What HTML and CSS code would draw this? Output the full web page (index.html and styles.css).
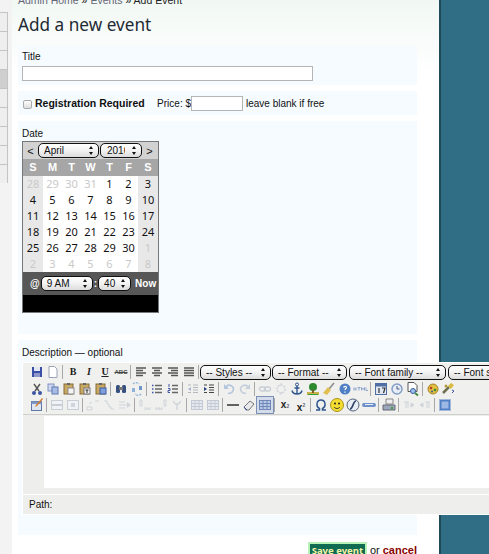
FILE: index.html
```html
<!DOCTYPE html>
<html lang="en">
<head>
  <meta charset="UTF-8" />
  <title>Add a new event</title>
  <link rel="stylesheet" href="styles.css">
</head>
<body>

  <svg class="defs" width="0" height="0">
    <symbol id="save" viewBox="0 0 16 16"><rect x="3" y="3" width="10" height="10" fill="#3a4fa8"/><rect x="5" y="3" width="6" height="4" fill="#e4e8f4"/><rect x="5" y="9" width="6" height="4" fill="#8f98c8"/></symbol>
    <symbol id="new" viewBox="0 0 16 16"><path d="M4 2.500h5.500l2.500 2.500v8.500h-8z" fill="#fff" stroke="#9aa3b5"/></symbol>
    <symbol id="alignl" viewBox="0 0 16 16"><path d="M3 4h10M3 6.500h7M3 9h10M3 11.500h7" stroke="#555" stroke-width="1.500"/></symbol>
    <symbol id="alignc" viewBox="0 0 16 16"><path d="M3 4h10M5 6.500h6M3 9h10M5 11.500h6" stroke="#555" stroke-width="1.500"/></symbol>
    <symbol id="alignr" viewBox="0 0 16 16"><path d="M3 4h10M6 6.500h7M3 9h10M6 11.500h7" stroke="#555" stroke-width="1.500"/></symbol>
    <symbol id="alignj" viewBox="0 0 16 16"><path d="M3 4h10M3 6.500h10M3 9h10M3 11.500h10" stroke="#555" stroke-width="1.500"/></symbol>
    <symbol id="cut" viewBox="0 0 16 16"><path d="M5 3l5 7M11 3l-5 7" stroke="#555" stroke-width="1.400"/><circle cx="5" cy="12" r="2" fill="#3c55a5"/><circle cx="11" cy="12" r="2" fill="#3c55a5"/></symbol>
    <symbol id="copy" viewBox="0 0 16 16"><rect x="3" y="3" width="6" height="7" fill="#cfd8ee" stroke="#7f93c4"/><rect x="7" y="6" width="6" height="7" fill="#a9bce6" stroke="#5f78b4"/></symbol>
    <symbol id="paste" viewBox="0 0 16 16"><rect x="3" y="3" width="9" height="10" fill="#c9a862" stroke="#85693a"/><rect x="6" y="2" width="3" height="2" fill="#666"/><rect x="7" y="7" width="6" height="6" fill="#f4f4f4" stroke="#8a8a8a"/></symbol>
    <symbol id="pastet" viewBox="0 0 16 16"><rect x="3" y="3" width="9" height="10" fill="#c9a862" stroke="#85693a"/><rect x="6" y="2" width="3" height="2" fill="#666"/><rect x="7" y="7" width="6" height="6" fill="#eee" stroke="#777"/><path d="M8.500 9h3M10 9v3" stroke="#333"/></symbol>
    <symbol id="pastew" viewBox="0 0 16 16"><rect x="3" y="3" width="9" height="10" fill="#c9a862" stroke="#85693a"/><rect x="6" y="2" width="3" height="2" fill="#666"/><rect x="7" y="7" width="6" height="6" fill="#7f9fdc" stroke="#3c5ca5"/></symbol>
    <symbol id="find" viewBox="0 0 16 16"><rect x="3" y="4" width="4" height="8" rx="1.500" fill="#35507f"/><rect x="9" y="4" width="4" height="8" rx="1.500" fill="#35507f"/><rect x="6" y="6" width="4" height="3" fill="#777"/></symbol>
    <symbol id="replace" viewBox="0 0 16 16"><path d="M4 3a4 4 0 0 1 6 0M12 13a4 4 0 0 1-6 0" fill="none" stroke="#8fb2dc" stroke-width="1.400" stroke-dasharray="2 1"/><rect x="3" y="7" width="3" height="4" fill="#8fb2dc"/><rect x="10" y="5" width="3" height="4" fill="#6f96c8"/></symbol>
    <symbol id="ul" viewBox="0 0 16 16"><path d="M6 4.500h7M6 8h7M6 11.500h7" stroke="#666" stroke-width="1.300"/><path d="M3 4.500h1.500M3 8h1.500M3 11.500h1.500" stroke="#3c55a5" stroke-width="1.500"/></symbol>
    <symbol id="ol" viewBox="0 0 16 16"><path d="M7 4.500h6M7 8h6M7 11.500h6" stroke="#666" stroke-width="1.300"/><path d="M4 3v3M3 7.500h2v2h-2v2h2" fill="none" stroke="#3c55a5"/></symbol>
    <symbol id="outdent" viewBox="0 0 16 16"><path d="M8 4h5M8 6.500h5M8 9h5M8 11.500h5M3 4h3M3 11.500h3" stroke="#b5b8bd"/><path d="M6 6l-3 2 3 2z" fill="#a9b6cc"/></symbol>
    <symbol id="indent" viewBox="0 0 16 16"><path d="M8 4h5M8 6.500h5M8 9h5M8 11.500h5M3 4h3M3 11.500h3" stroke="#444"/><path d="M3 6l3 2-3 2z" fill="#26437f"/></symbol>
    <symbol id="undo" viewBox="0 0 16 16"><path d="M5 6a4 4 0 1 1 2 6" fill="none" stroke="#b4c6de" stroke-width="1.600"/><path d="M3 3v5h5z" fill="#b4c6de"/></symbol>
    <symbol id="redo" viewBox="0 0 16 16"><path d="M11 6a4 4 0 1 0-2 6" fill="none" stroke="#c6cfdc" stroke-width="1.600"/><path d="M13 3v5h-5z" fill="#c6cfdc"/></symbol>
    <symbol id="link" viewBox="0 0 16 16"><rect x="2.500" y="6" width="6" height="4" rx="2" fill="none" stroke="#c8ced6" stroke-width="1.300"/><rect x="7.500" y="6" width="6" height="4" rx="2" fill="none" stroke="#c8ced6" stroke-width="1.300"/></symbol>
    <symbol id="unlink" viewBox="0 0 16 16"><circle cx="8" cy="8" r="4" fill="none" stroke="#d0d4da" stroke-width="1.600" stroke-dasharray="2 1"/><path d="M8 2v3M8 11v3" stroke="#d0d4da"/></symbol>
    <symbol id="anchor" viewBox="0 0 16 16"><circle cx="8" cy="3.500" r="1.500" fill="none" stroke="#2e568f"/><path d="M8 5v8M5.500 7h5M3 9.500c.5 2.500 3 3.500 5 3.500s4.500-1 5-3.500" fill="none" stroke="#2e568f" stroke-width="1.400"/></symbol>
    <symbol id="image" viewBox="0 0 16 16"><rect x="2" y="11" width="12" height="3" fill="#c9b24a"/><circle cx="8" cy="6" r="4" fill="#2e8a2e"/><rect x="7" y="9" width="2" height="3" fill="#7a5a2a"/><rect x="3" y="13" width="10" height="1" fill="#36a336"/></symbol>
    <symbol id="clean" viewBox="0 0 16 16"><path d="M13 2l-5 6" stroke="#8a8a8a" stroke-width="1.500"/><path d="M7 6l3 3-4 5-4-2z" fill="#e0c050"/></symbol>
    <symbol id="help" viewBox="0 0 16 16"><circle cx="8" cy="8" r="5.500" fill="#4f7fc4"/><path d="M6.500 6.500c.5-1.500 3-1.500 3 0 0 1-1.500 1-1.500 2.500M8 10.500v1.200" fill="none" stroke="#fff" stroke-width="1.200"/></symbol>
    <symbol id="html" viewBox="0 0 16 16"><path d="M1 6.500v3M1 8h2M3 6.500v3M4.500 6.500h3M6 6.500v3M8.500 9.500v-3l1.500 2 1.500-2v3M13 6.500v3h2" fill="none" stroke="#8fa6cc"/></symbol>
    <symbol id="date" viewBox="0 0 16 16"><rect x="2.500" y="2.500" width="11" height="11" fill="#dfe6f2" stroke="#4f6fa5"/><rect x="2.500" y="2.500" width="11" height="3" fill="#4f6fa5"/><path d="M6 7v5M9 7h3l-1.500 5" fill="none" stroke="#333" stroke-width="1.200"/></symbol>
    <symbol id="time" viewBox="0 0 16 16"><circle cx="8" cy="8" r="5" fill="#e6edf8" stroke="#7f9bc8" stroke-width="1.400"/><path d="M8 5v3h2.500" fill="none" stroke="#4a5a78"/></symbol>
    <symbol id="preview" viewBox="0 0 16 16"><path d="M3 1.500h6l3 3v6h-9z" fill="#fff" stroke="#555"/><circle cx="8" cy="10" r="2.500" fill="#9cc0e8" stroke="#3c5ca5"/><path d="M10 12l3 2.500" stroke="#3a8a3a" stroke-width="1.800"/></symbol>
    <symbol id="macro" viewBox="0 0 16 16"><circle cx="8" cy="8" r="5" fill="#e0c040" stroke="#a8842a"/><circle cx="6" cy="7" r="1.300" fill="#c03a2a"/><circle cx="10" cy="9" r="1.300" fill="#3a8a3a"/><circle cx="7" cy="10.500" r="1" fill="#3c55a5"/></symbol>
    <symbol id="spell" viewBox="0 0 16 16"><path d="M2 12l6-6" stroke="#707050" stroke-width="2.500"/><path d="M7 5l3-3 3 2-3 4z" fill="#d8bc40"/><path d="M11 9l2 1-2 2" fill="none" stroke="#3c55a5"/><circle cx="5" cy="5" r="1.500" fill="#b09a40"/></symbol>
    <symbol id="tedit" viewBox="0 0 16 16"><rect x="2.500" y="4.500" width="10" height="9" fill="#dfe6f2" stroke="#5f78a8"/><rect x="2.500" y="4.500" width="10" height="2.500" fill="#7f97c4"/><path d="M14 2l-6 7-2 1 1-2 6-7z" fill="#d8792a"/></symbol>
    <symbol id="trow" viewBox="0 0 16 16"><rect x="2.500" y="3.500" width="11" height="9" fill="#f0f2f5" stroke="#c8ced6"/><path d="M3 8h10" stroke="#c8ced6" stroke-width="2"/></symbol>
    <symbol id="tcell" viewBox="0 0 16 16"><rect x="2.500" y="3.500" width="11" height="9" fill="#f0f2f5" stroke="#c8ced6"/><rect x="6" y="6" width="4" height="4" fill="#d0d5dc"/></symbol>
    <symbol id="tsplit" viewBox="0 0 16 16"><path d="M2 13h5v-3h-5zM4 7l3-2M10 4h4" fill="none" stroke="#cfd4da"/></symbol>
    <symbol id="tstep" viewBox="0 0 16 16"><path d="M3 4h3v3h2v3h2v2h3" fill="none" stroke="#cfd4da"/></symbol>
    <symbol id="tarrow" viewBox="0 0 16 16"><path d="M2 5h6M2 11h6M2 8h8" stroke="#d0d5dc"/><path d="M10 5l4 3-4 3z" fill="#d0d5dc"/></symbol>
    <symbol id="colL" viewBox="0 0 16 16"><path d="M3 3v6h2v-6zM8 12h5" fill="none" stroke="#cfd4da"/><path d="M8 10v3M10.500 10v3M13 10v3" stroke="#d4d9df"/></symbol>
    <symbol id="colR" viewBox="0 0 16 16"><path d="M3 12h6M3 10v3M6 10v3M9 10v3M11 3v6h2v-6z" fill="none" stroke="#cfd4da"/></symbol>
    <symbol id="colX" viewBox="0 0 16 16"><path d="M4 4l2.500 3h3l2.500-3M8 7v6" fill="none" stroke="#cfd4da" stroke-width="1.300"/></symbol>
    <symbol id="grid" viewBox="0 0 16 16"><rect x="2.500" y="3.500" width="11" height="9" fill="#e6eaf0" stroke="#c4cad4"/><path d="M2.500 6.500h11M2.500 9.500h11M6 3.500v9M10 3.500v9" stroke="#c4cad4"/></symbol>
    <symbol id="hr" viewBox="0 0 16 16"><path d="M2 8h12" stroke="#333" stroke-width="1.500"/></symbol>
    <symbol id="eraser" viewBox="0 0 16 16"><path d="M3 10l6-6 4 3-5 6H5z" fill="#e8e8ea" stroke="#777"/><path d="M3 10l3 3" stroke="#3c55a5"/></symbol>
    <symbol id="aid" viewBox="0 0 16 16"><rect x="2.500" y="3.500" width="11" height="9" fill="#b8c8e6" stroke="#6f88b8"/><path d="M2.500 6.500h11M2.500 9.500h11M6 3.500v9M10 3.500v9" stroke="#6f88b8"/></symbol>
    <symbol id="omega" viewBox="0 0 16 16"><path d="M3 13h3.500v-1.500c-4-2-3-8.500 1.500-8.500s5.500 6.500 1.500 8.500v1.500h3.500" fill="none" stroke="#2e568f" stroke-width="1.500"/></symbol>
    <symbol id="smile" viewBox="0 0 16 16"><circle cx="8" cy="8" r="6.500" fill="#f4dc30" stroke="#a89420"/><circle cx="6" cy="6.500" r="1" fill="#222"/><circle cx="10" cy="6.500" r="1" fill="#222"/><path d="M5 10c1.500 2 4.500 2 6 0" fill="none" stroke="#333"/></symbol>
    <symbol id="flash" viewBox="0 0 16 16"><circle cx="8" cy="8" r="6" fill="#e8edf5" stroke="#55657f"/><path d="M11 4c-3 0-3 8-6 8" fill="none" stroke="#2e3f66" stroke-width="1.700"/></symbol>
    <symbol id="media" viewBox="0 0 16 16"><rect x="1" y="6" width="14" height="4" rx="2" fill="#6f90c8"/><path d="M4 7.500h8" stroke="#e6eef8"/></symbol>
    <symbol id="print" viewBox="0 0 16 16"><path d="M5 2h7v5h-7z" fill="#eee" stroke="#888"/><path d="M2 8h12v5h-12z" fill="#9ba8bc" stroke="#667"/><rect x="10" y="10" width="2" height="2" fill="#3aa33a"/></symbol>
    <symbol id="ltr" viewBox="0 0 16 16"><path d="M3 5h5M5 5v6M7 5v6M10 6l3 2-3 2z" fill="#cfd4da" stroke="#cfd4da"/></symbol>
    <symbol id="rtl" viewBox="0 0 16 16"><path d="M8 5h5M10 5v6M12 5v6M6 6l-3 2 3 2z" fill="#cfd4da" stroke="#cfd4da"/></symbol>
    <symbol id="full" viewBox="0 0 16 16"><rect x="2.500" y="2.500" width="11" height="11" fill="#4f7fc4" stroke="#a4b8da"/><rect x="4.500" y="4.500" width="7" height="7" fill="#9cb8e4"/></symbol>
  </svg>

  <div class="page">
    <div class="side">
      <div class="side-row"></div>
      <div class="side-row"></div>
      <div class="side-row"></div>
      <div class="side-row dark"></div>
      <div class="side-row"></div>
      <div class="side-row"></div>
      <div class="side-row"></div>
      <div class="side-row"></div>
      <div class="side-row"></div>
    </div>

    <div class="main">
      <div class="crumbs"><a href="#">Admin Home</a> » <a href="#">Events</a> » Add Event</div>
      <h1>Add a new event</h1>

      <div class="box box-title">
        <label>Title</label>
        <input type="text" class="title-input" />
      </div>

      <div class="box box-reg">
        <span class="check"></span>
        <b class="reg-label">Registration Required</b>
        <span class="price">Price: $</span><input type="text" class="price-input" />
        <span class="hint">leave blank if free</span>
      </div>

      <div class="box box-date">
        <label>Date</label>
        <div class="cal">
          <div class="cal-head">
            <span class="nav">&lt;</span>
            <div class="sel sel-month"><span>April</span><i class="arrows"></i></div>
            <div class="sel sel-year"><span>2016</span><i class="arrows"></i></div>
            <span class="nav">&gt;</span>
          </div>
          <div class="cal-grid days">
            <span>S</span><span>M</span><span>T</span><span>W</span><span>T</span><span>F</span><span>S</span>
          </div>
          <div class="cal-grid dates">
            <span class="we off">28</span><span class="off">29</span><span class="off">30</span><span class="off">31</span><span>1</span><span>2</span><span class="we">3</span>
            <span class="we">4</span><span>5</span><span>6</span><span>7</span><span>8</span><span>9</span><span class="we">10</span>
            <span class="we">11</span><span>12</span><span>13</span><span>14</span><span>15</span><span>16</span><span class="we">17</span>
            <span class="we">18</span><span>19</span><span>20</span><span>21</span><span>22</span><span>23</span><span class="we">24</span>
            <span class="we">25</span><span>26</span><span>27</span><span>28</span><span>29</span><span>30</span><span class="we off">1</span>
            <span class="we off">2</span><span class="off">3</span><span class="off">4</span><span class="off">5</span><span class="off">6</span><span class="off">7</span><span class="we off">8</span>
          </div>
          <div class="cal-time">
            <b>@</b>
            <div class="sel sel-hour"><span>9 AM</span><i class="arrows"></i></div>
            <b>:</b>
            <div class="sel sel-min"><span>40</span><i class="arrows"></i></div>
            <b class="now">Now</b>
          </div>
          <div class="cal-foot"></div>
        </div>
      </div>

      <div class="box box-desc">
        <label>Description — optional</label>
        <div class="editor">
          <div class="toolbar">
            <div class="row">
              <svg class="ico"><use href="#save"/></svg>
              <svg class="ico"><use href="#new"/></svg>
              <i class="sep"></i>
              <span class="ico txt">B</span>
              <span class="ico txt it">I</span>
              <span class="ico txt un">U</span>
              <span class="ico txt abc">ABC</span>
              <i class="sep"></i>
              <svg class="ico"><use href="#alignl"/></svg>
              <svg class="ico"><use href="#alignc"/></svg>
              <svg class="ico"><use href="#alignr"/></svg>
              <svg class="ico"><use href="#alignj"/></svg>
              <i class="sep"></i>
              <div class="sel sel-styles"><span>-- Styles --</span><i class="arrows"></i></div>
              <div class="sel sel-format"><span>-- Format --</span><i class="arrows"></i></div>
              <div class="sel sel-family"><span>-- Font family --</span><i class="arrows"></i></div>
              <div class="sel sel-size"><span>-- Font size --</span><i class="arrows"></i></div>
            </div>
            <div class="row">
              <svg class="ico"><use href="#cut"/></svg>
              <svg class="ico"><use href="#copy"/></svg>
              <svg class="ico"><use href="#paste"/></svg>
              <svg class="ico"><use href="#pastet"/></svg>
              <svg class="ico"><use href="#pastew"/></svg>
              <i class="sep"></i>
              <svg class="ico"><use href="#find"/></svg>
              <svg class="ico"><use href="#replace"/></svg>
              <i class="sep"></i>
              <svg class="ico"><use href="#ul"/></svg>
              <svg class="ico"><use href="#ol"/></svg>
              <i class="sep"></i>
              <svg class="ico"><use href="#outdent"/></svg>
              <svg class="ico"><use href="#indent"/></svg>
              <i class="sep"></i>
              <svg class="ico"><use href="#undo"/></svg>
              <svg class="ico"><use href="#redo"/></svg>
              <i class="sep"></i>
              <svg class="ico"><use href="#link"/></svg>
              <svg class="ico"><use href="#unlink"/></svg>
              <svg class="ico"><use href="#anchor"/></svg>
              <svg class="ico"><use href="#image"/></svg>
              <svg class="ico"><use href="#clean"/></svg>
              <svg class="ico"><use href="#help"/></svg>
              <svg class="ico"><use href="#html"/></svg>
              <i class="sep"></i>
              <svg class="ico"><use href="#date"/></svg>
              <svg class="ico"><use href="#time"/></svg>
              <svg class="ico"><use href="#preview"/></svg>
              <i class="sep"></i>
              <svg class="ico"><use href="#macro"/></svg>
              <svg class="ico"><use href="#spell"/></svg>
            </div>
            <div class="row">
              <svg class="ico"><use href="#tedit"/></svg>
              <i class="sep"></i>
              <svg class="ico"><use href="#trow"/></svg>
              <svg class="ico"><use href="#tcell"/></svg>
              <i class="sep"></i>
              <svg class="ico"><use href="#tsplit"/></svg>
              <svg class="ico"><use href="#tstep"/></svg>
              <svg class="ico"><use href="#tarrow"/></svg>
              <i class="sep"></i>
              <svg class="ico"><use href="#colL"/></svg>
              <svg class="ico"><use href="#colR"/></svg>
              <svg class="ico"><use href="#colX"/></svg>
              <i class="sep"></i>
              <svg class="ico"><use href="#grid"/></svg>
              <svg class="ico"><use href="#grid"/></svg>
              <i class="sep"></i>
              <svg class="ico"><use href="#hr"/></svg>
              <svg class="ico"><use href="#eraser"/></svg>
              <svg class="ico on"><use href="#aid"/></svg>
              <i class="sep"></i>
              <span class="ico txt sub">x<small>2</small></span>
              <span class="ico txt sup">x<small>2</small></span>
              <i class="sep"></i>
              <svg class="ico"><use href="#omega"/></svg>
              <svg class="ico"><use href="#smile"/></svg>
              <svg class="ico"><use href="#flash"/></svg>
              <svg class="ico"><use href="#media"/></svg>
              <i class="sep"></i>
              <svg class="ico"><use href="#print"/></svg>
              <i class="sep"></i>
              <svg class="ico"><use href="#ltr"/></svg>
              <svg class="ico"><use href="#rtl"/></svg>
              <i class="sep"></i>
              <svg class="ico"><use href="#full"/></svg>
            </div>
          </div>
          <div class="edit-area"><div class="edit-text"></div></div>
          <div class="path">Path:</div>
        </div>
      </div>

      <div class="actions">
        <button type="button" class="save">Save event</button> or <a href="#" class="cancel">cancel</a>
      </div>
    </div>

    <div class="right"></div>
  </div>

</body>
</html>
```

FILE: styles.css
```css
html, body {
  margin: 0;
  height: 554px;
  overflow: hidden;
}

body {
  font-family: "Liberation Sans", sans-serif;
  font-size: 10px;
  color: #111;
  background: #2f6e85;
}

.defs {
  display: block;
  height: 0;
}

.page {
  display: flex;
  height: 554px;
}

/* left strip, tail of the admin menu */
.side {
  width: 12px;
  flex: none;
  background: #f3f3f3;
  padding-top: 12px;
  box-sizing: border-box;
}

.side-row {
  width: 7px;
  height: 18px;
  background: #eeeeee;
  border: 1px solid #c4c4c4;
  border-left: none;
  border-bottom: none;
}

.side-row.dark {
  background: #cfcfcf;
}

.main {
  width: 427px;
  flex: none;
  box-sizing: border-box;
  padding: 0 22px 0 6px;
  background: linear-gradient(#f1f8f4, #ffffff 75px);
  position: relative;
  z-index: 1;
}

.right {
  flex: 1;
  background: #2f6e85;
  border-left: 2px solid #1f4a5a;
}

.crumbs {
  margin-top: -6px;
  height: 16px;
  line-height: 12px;
  font-size: 10.500px;
  color: #222;
}

.crumbs a {
  color: #667;
  text-decoration: none;
}

h1 {
  margin: 0 0 6px;
  height: 30px;
  line-height: 30px;
  font-family: "Noto Sans", sans-serif;
  font-size: 17.200px;
  font-weight: normal;
  color: #1e2a33;
}

.box {
  background: #f5fbff;
  padding: 0 4px;
  margin-bottom: 6px;
  width: 399px;
  box-sizing: border-box;
}

label {
  display: block;
  line-height: 12px;
}

.box-title {
  height: 39px;
  padding-top: 5px;
}

.title-input {
  display: block;
  width: 291px;
  height: 15px;
  margin-top: 3px;
  box-sizing: border-box;
  border: 1px solid #b5b5b5;
  background: #fff;
  padding: 0;
}

.box-reg {
  height: 24px;
  display: flex;
  align-items: center;
  white-space: nowrap;
}

.check {
  width: 7px;
  height: 7px;
  margin: 3px 3px 0 1px;
  border: 1px solid #aaa;
  border-radius: 2px;
  background: linear-gradient(#fff, #ddd);
  flex: none;
}

.reg-label {
  width: 122px;
  flex: none;
  font-size: 10.500px;
}

.price {
  width: 34px;
  flex: none;
  text-align: right;
}

.price-input {
  width: 52px;
  height: 15px;
  box-sizing: border-box;
  border: 1px solid #b5b5b5;
  background: #fff;
  padding: 0;
  margin: 0 3px 0 0;
  flex: none;
}

.box-date {
  height: 213px;
  padding-top: 7px;
}

.cal {
  width: 137px;
  height: 172px;
  margin-top: 1px;
  box-sizing: border-box;
  border: 1px solid #777;
  background: #fff;
  display: flex;
  flex-direction: column;
}

.cal-head {
  height: 17px;
  flex: none;
  background: #d2d2d2;
  display: flex;
  align-items: center;
}

.nav {
  width: 15px;
  flex: none;
  text-align: center;
  font-size: 11px;
  color: #111;
}

.sel {
  height: 15px;
  box-sizing: border-box;
  border: 1px solid #111;
  border-radius: 5px;
  background: linear-gradient(#ffffff, #f2f2f2 50%, #dcdcdc);
  display: flex;
  align-items: center;
  justify-content: space-between;
  padding: 0 3px 0 5px;
  font-family: "Liberation Sans", sans-serif;
  font-size: 10px;
  color: #111;
  overflow: hidden;
  white-space: nowrap;
  flex: none;
}

.sel span {
  overflow: hidden;
  flex: 1;
}

/* up/down arrows of a mac select */
.arrows {
  flex: none;
  width: 5px;
  height: 9px;
  margin: 0 1px 0 2px;
  position: relative;
}

.arrows::before,
.arrows::after {
  content: "";
  position: absolute;
  left: 0;
  border-left: 2.500px solid transparent;
  border-right: 2.500px solid transparent;
}

.arrows::before {
  top: 0;
  border-bottom: 3.500px solid #111;
}

.arrows::after {
  bottom: 0;
  border-top: 3.500px solid #111;
}

.sel-month { width: 61px; }
.sel-year { width: 42px; margin-left: 1px; padding-left: 6px; }
.sel-year span { flex: none; width: 18px; }
.sel-hour { width: 52px; }
.sel-min { width: 33px; }

.cal-grid {
  display: grid;
  grid-template-columns: 20px 19px 19px 19px 19px 19px 20px;
}

.days {
  height: 17px;
  flex: none;
  background: #a6a6a6;
  color: #fff;
  font-weight: bold;
  font-size: 11px;
  line-height: 17px;
  text-align: center;
}

.dates {
  grid-auto-rows: 16px;
  line-height: 16px;
  text-align: center;
  font-family: "Noto Sans", sans-serif;
  font-size: 11px;
  color: #111;
  flex: none;
}

.dates .we {
  background: #e8e8e8;
}

.dates .off {
  color: #c9c9c9;
}

.cal-time {
  height: 23px;
  flex: none;
  background: #575757;
  color: #fff;
  display: flex;
  align-items: center;
  padding-left: 7px;
  gap: 1px;
}

.now {
  margin-left: 3px;
  font-size: 10px;
}

.cal-foot {
  flex: 1;
  background: #000;
}

.box-desc {
  height: 195px;
  padding-top: 7px;
  margin-bottom: 7px;
}

.editor {
  width: 470px;
  height: 153px;
  margin-top: 3px;
  background: #fff;
  box-sizing: border-box;
  padding: 1px 0 1px 1px;
  position: relative;
  z-index: 2;
}

.toolbar {
  background: #f0f0ee;
  height: 52px;
  border-bottom: 1px solid #cfcfcc;
  padding: 1px 0 0 6px;
  box-sizing: border-box;
}

.row {
  display: flex;
  align-items: center;
  height: 16.500px;
  white-space: nowrap;
}

.ico {
  width: 16px;
  height: 16px;
  flex: none;
}

.ico.on {
  background: #d4dcec;
  outline: 1px solid #7c8fb4;
}

.txt {
  font-family: "Liberation Serif", serif;
  font-size: 10px;
  font-weight: bold;
  line-height: 16px;
  text-align: center;
  color: #222;
}

.it { font-style: italic; }
.un { text-decoration: underline; }

.abc {
  font-family: "Liberation Sans", sans-serif;
  font-size: 6px;
  color: #444;
  text-decoration: line-through;
}

.sub, .sup {
  font-family: "Liberation Sans", sans-serif;
}

.txt small {
  font-size: 5px;
  color: #667;
}

.sup small {
  vertical-align: 4px;
}

.sep {
  display: block;
  flex: none;
  width: 1px;
  height: 14px;
  margin: 0 2px 0 1px;
  background: #a8a8a8;
}

.sel-styles { width: 71px; margin-left: -1px; }
.sel-format { width: 75px; margin-left: 1px; }
.sel-family { width: 97px; margin-left: 2px; }
.sel-size { width: 90px; margin-left: 2px; }

.edit-area {
  height: 72px;
  padding: 1px 0 6px 21px;
  background: #eeeeec;
}

.edit-text {
  height: 100%;
  background: #fff;
}

.path {
  margin-top: 1px;
  height: 19px;
  line-height: 19px;
  background: #eeeeec;
  padding-left: 6px;
  font-size: 10px;
}

.actions {
  width: 399px;
  text-align: right;
  font-size: 11px;
  line-height: 14px;
}

.save {
  height: 16px;
  width: 59px;
  padding: 0;
  border: 2px solid #b6f2b6;
  background: #0f6b52;
  color: #f4f4a8;
  font-family: "Noto Sans", sans-serif;
  font-size: 9.500px;
  font-weight: bold;
  line-height: 11px;
}

.cancel {
  color: #8a0000;
  font-weight: bold;
  text-decoration: underline;
}
```
